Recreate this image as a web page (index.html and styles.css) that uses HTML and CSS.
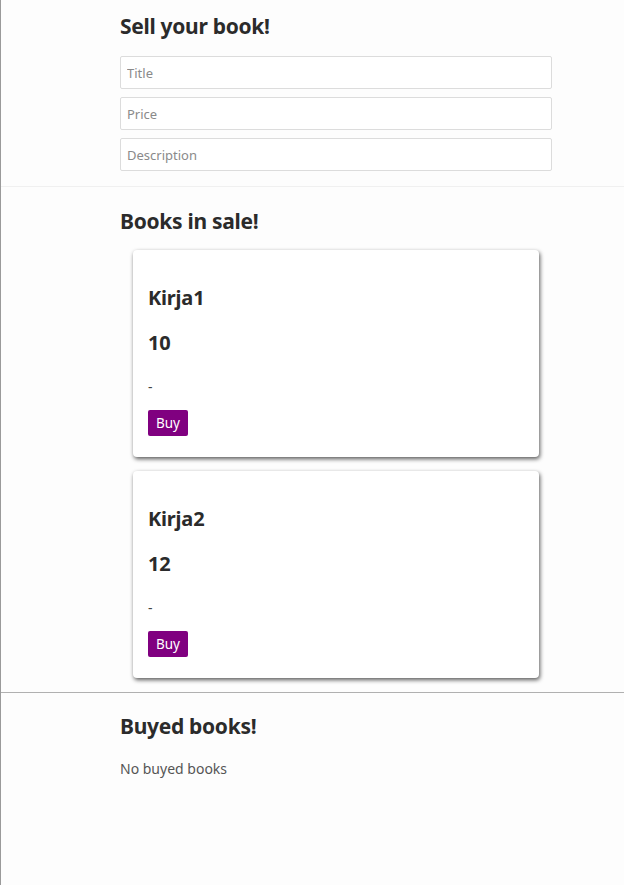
FILE: index.html
```html
<!DOCTYPE html>
<html>
<head>
<meta charset="utf-8">
<link rel="stylesheet" href="styles.css">
</head>
<body>
<div class="page">
  <section class="sell">
    <div class="inner">
      <h2 class="title">Sell your book!</h2>
      <input class="field" type="text" placeholder="Title">
      <input class="field" type="text" placeholder="Price">
      <input class="field" type="text" placeholder="Description">
    </div>
  </section>
  <section class="sale">
    <div class="inner">
      <h2 class="title">Books in sale!</h2>
      <div class="card">
        <h3 class="card-title">Kirja1</h3>
        <h3 class="card-price">10</h3>
        <p class="card-desc">-</p>
        <button class="buy">Buy</button>
      </div>
      <div class="card">
        <h3 class="card-title">Kirja2</h3>
        <h3 class="card-price">12</h3>
        <p class="card-desc">-</p>
        <button class="buy">Buy</button>
      </div>
    </div>
  </section>
  <section class="bought">
    <div class="inner">
      <h2 class="title">Buyed books!</h2>
      <p class="empty">No buyed books</p>
    </div>
  </section>
</div>
</body>
</html>
```

FILE: styles.css
```css
html, body {
  margin: 0;
  padding: 0;
  height: 100%;
}
body {
  background: #fdfdfd;
  font-family: "Noto Sans", "Open Sans", sans-serif;
  color: #2d2d2d;
}
.page {
  min-height: 100%;
  border-left: 1px solid #9a9a9a;
  box-sizing: border-box;
}
.inner {
  width: 432px;
  margin-left: 119px;
}
.sell {
  padding: 10px 0 15px;
  border-bottom: 1px solid #f0f0f0;
}
.title {
  margin: 0 0 14px;
  font-size: 21px;
  line-height: 32px;
  font-weight: 700;
  letter-spacing: -0.3px;
  color: #2b2b2b;
}
.field {
  display: block;
  box-sizing: border-box;
  width: 432px;
  height: 33px;
  margin: 0 0 8px;
  padding: 0 6px;
  border: 1px solid #dcdcdc;
  border-radius: 2px;
  background: #fff;
  font-family: inherit;
  font-size: 13px;
  color: #333;
  outline: none;
}
.field:last-child { margin-bottom: 0; }
.field::placeholder { color: #8a8a8a; }
.sale {
  padding: 18px 0 14px;
  border-bottom: 1px solid #b0b0b0;
}
.sale .title { margin-bottom: 13px; }
.card {
  margin: 0 13px 14px 13px;
  height: 207px;
  box-sizing: border-box;
  padding: 34px 15px 0;
  background: #fff;
  border-radius: 4px;
  box-shadow: 1px 2px 4px rgba(0,0,0,0.65);
}
.card:last-child { margin-bottom: 0; }
.card-title, .card-price {
  margin: 0 0 18px;
  font-size: 20px;
  line-height: 27px;
  font-weight: 700;
  letter-spacing: -0.2px;
  color: #2b2b2b;
}
.card-price { margin-bottom: 21px; }
.card-desc {
  margin: 0 0 14px;
  font-size: 14px;
  line-height: 19px;
  color: #444;
}
.buy {
  display: block;
  height: 26px;
  padding: 0 8px;
  border: none;
  border-radius: 2px;
  background: #800080;
  color: #fff;
  font-family: inherit;
  font-size: 13.5px;
}
.bought {
  padding: 17px 0 0;
}
.bought .title { margin-bottom: 17px; }
.empty {
  margin: 0;
  font-size: 14px;
  line-height: 19px;
  color: #555;
}
```
